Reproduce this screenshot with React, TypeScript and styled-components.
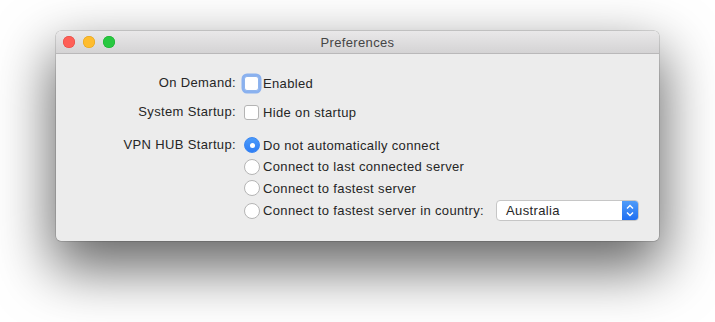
import styled, { createGlobalStyle } from "styled-components";

const GlobalStyle = createGlobalStyle`
  html, body {
    margin: 0;
    padding: 0;
    background: #ffffff;
  }
  body {
    font-family: "Liberation Sans", Arial, sans-serif;
    font-size: 13px;
    letter-spacing: 0.35px;
    color: #262626;
  }
`;

const Stage = styled.div`
  width: 715px;
  height: 322px;
  padding: 31px 0 0 56px;
  box-sizing: border-box;
  overflow: hidden;
`;

const Window = styled.div`
  width: 603px;
  border-radius: 5px;
  overflow: hidden;
  background: #ececec;
  box-shadow: 0 0 0 0.5px rgba(0, 0, 0, 0.25), 0 24px 56px 4px rgba(0, 0, 0, 0.6);
`;

const TitleBar = styled.div`
  position: relative;
  height: 22px;
  display: flex;
  align-items: center;
  justify-content: center;
  background: linear-gradient(#e9e8e9, #d4d3d4);
  border-bottom: 1px solid #b9b8b9;
  color: #454545;
  font-size: 13px;
`;

const Lights = styled.div`
  position: absolute;
  left: 7px;
  top: 5px;
  display: flex;
  gap: 8px;
`;

const Light = styled.span<{ $color: string; $edge: string }>`
  width: 12px;
  height: 12px;
  border-radius: 50%;
  background: ${(p) => p.$color};
  box-shadow: inset 0 0 0 0.5px ${(p) => p.$edge};
`;

const Body = styled.div`
  display: grid;
  grid-template-columns: 180px 1fr;
  column-gap: 8px;
  row-gap: 9px;
  padding: 19px 0 20.5px 0;
  white-space: nowrap;
`;

const Label = styled.div<{ $top?: number }>`
  text-align: right;
  height: 20px;
  line-height: 20px;
  margin-top: ${(p) => p.$top ?? 0}px;
`;

const Control = styled.div`
  display: flex;
  align-items: center;
  gap: 4px;
  height: 20px;
`;

const Checkbox = styled.span<{ $focused?: boolean }>`
  flex-shrink: 0;
  width: 13px;
  height: 13px;
  border-radius: 3px;
  background: #fff;
  border: 1px solid ${(p) => (p.$focused ? "#8fb4ec" : "#b4b4b4")};
  box-shadow: ${(p) => (p.$focused ? "0 0 0 2.5px #8ab1ef" : "none")};
  box-sizing: content-box;
`;

const RadioGroup = styled.div<{ $top?: number }>`
  display: flex;
  flex-direction: column;
  gap: 3.5px;
  margin-top: ${(p) => p.$top ?? 0}px;
`;

const RadioRow = styled.div<{ $tall?: boolean }>`
  display: flex;
  align-items: center;
  gap: 3px;
  height: ${(p) => (p.$tall ? 20 : 18)}px;
`;

const Radio = styled.span<{ $checked?: boolean }>`
  flex-shrink: 0;
  width: 16px;
  height: 16px;
  border-radius: 50%;
  box-sizing: border-box;
  display: flex;
  align-items: center;
  justify-content: center;
  background: ${(p) => (p.$checked ? "linear-gradient(#4a9af9, #2f7ef5)" : "#fff")};
  border: 1px solid ${(p) => (p.$checked ? "#3a86f2" : "#b4b4b4")};
  &::after {
    content: "";
    width: 5px;
    height: 5px;
    border-radius: 50%;
    background: #fff;
    display: ${(p) => (p.$checked ? "block" : "none")};
  }
`;

const Popup = styled.div`
  flex-shrink: 0;
  margin-left: 9px;
  width: 143px;
  height: 21px;
  box-sizing: border-box;
  display: flex;
  border-radius: 4px;
  background: #fff;
  border: 1px solid #c6c6c6;
  overflow: hidden;
`;

const PopupText = styled.span`
  flex: 1;
  padding-left: 9px;
  line-height: 19px;
`;

const PopupArrows = styled.span`
  width: 16px;
  display: flex;
  align-items: center;
  justify-content: center;
  background: linear-gradient(#4f9cf9, #1f6ff2);
`;

export default function App() {
  return (
    <>
      <GlobalStyle />
      <Stage>
        <Window>
          <TitleBar>
            <Lights>
              <Light $color="#fe5f57" $edge="#e2463f" />
              <Light $color="#febc2e" $edge="#e1a116" />
              <Light $color="#28c840" $edge="#14ae2a" />
            </Lights>
            Preferences
          </TitleBar>
          <Body>
            <Label>On Demand:</Label>
            <Control>
              <Checkbox $focused />
              Enabled
            </Control>

            <Label>System Startup:</Label>
            <Control>
              <Checkbox />
              Hide on startup
            </Control>

            <Label $top={4}>VPN HUB Startup:</Label>
            <RadioGroup $top={5}>
              <RadioRow>
                <Radio $checked />
                Do not automatically connect
              </RadioRow>
              <RadioRow>
                <Radio />
                Connect to last connected server
              </RadioRow>
              <RadioRow>
                <Radio />
                Connect to fastest server
              </RadioRow>
              <RadioRow $tall>
                <Radio />
                Connect to fastest server in country:
                <Popup>
                  <PopupText>Australia</PopupText>
                  <PopupArrows>
                    <svg width="8" height="13" viewBox="0 0 8 13">
                      <path
                        d="M1 4.5 L4 1.5 L7 4.5 M1 8.5 L4 11.5 L7 8.5"
                        fill="none"
                        stroke="#fff"
                        strokeWidth="1.4"
                      />
                    </svg>
                  </PopupArrows>
                </Popup>
              </RadioRow>
            </RadioGroup>
          </Body>
        </Window>
      </Stage>
    </>
  );
}
